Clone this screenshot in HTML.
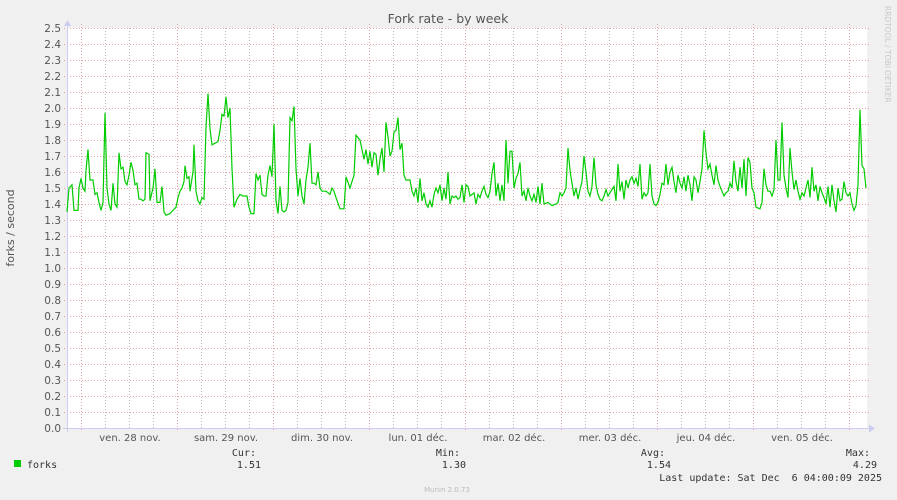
<!DOCTYPE html>
<html><head><meta charset="utf-8"><style>
html,body{margin:0;padding:0;background:#f0f0f0;}
svg{display:block;font-family:"DejaVu Sans","Liberation Sans",sans-serif;}
.m{font-family:"DejaVu Sans Mono","Liberation Mono",monospace;font-size:10px;fill:#333;}
</style></head><body>
<svg width="897" height="500" viewBox="0 0 897 500" xmlns="http://www.w3.org/2000/svg">
<rect width="897" height="500" fill="#f0f0f0"/>
<rect x="67" y="28" width="800" height="400" fill="#fff"/>
<g stroke="#bbb" stroke-width="1" stroke-dasharray="1,2">
<path d="M105.5 28V428M129.5 28V428M153.5 28V428M201.5 28V428M225.5 28V428M249.5 28V428M297.5 28V428M321.5 28V428M345.5 28V428M393.5 28V428M417.5 28V428M441.5 28V428M489.5 28V428M513.5 28V428M537.5 28V428M585.5 28V428M609.5 28V428M633.5 28V428M681.5 28V428M705.5 28V428M729.5 28V428M777.5 28V428M801.5 28V428M825.5 28V428"/>
</g>
<g stroke="#e8a0a0" stroke-width="1" stroke-dasharray="1,2">
<path d="M81.5 24V432M177.5 24V432M273.5 24V432M369.5 24V432M465.5 24V432M561.5 24V432M657.5 24V432M753.5 24V432M849.5 24V432"/>
<path d="M64 28.5H869M64 44.5H869M64 60.5H869M64 76.5H869M64 92.5H869M64 108.5H869M64 124.5H869M64 140.5H869M64 156.5H869M64 172.5H869M64 188.5H869M64 204.5H869M64 220.5H869M64 236.5H869M64 252.5H869M64 268.5H869M64 284.5H869M64 300.5H869M64 316.5H869M64 332.5H869M64 348.5H869M64 364.5H869M64 380.5H869M64 396.5H869M64 412.5H869"/>
</g>
<path d="M67.5 24V432M63 428.5H870" stroke="#ccccf0" stroke-width="1"/>
<path d="M64 26L67.5 20L71 26Z M869 424.5L875 428.5L869 432.5Z" fill="#ccccf0"/>
<g fill="#555" font-size="10.5" text-anchor="end">
<text x="61" y="32">2.5</text><text x="61" y="48">2.4</text><text x="61" y="64">2.3</text><text x="61" y="80">2.2</text><text x="61" y="96">2.1</text><text x="61" y="112">2.0</text><text x="61" y="128">1.9</text><text x="61" y="144">1.8</text><text x="61" y="160">1.7</text><text x="61" y="176">1.6</text><text x="61" y="192">1.5</text><text x="61" y="208">1.4</text><text x="61" y="224">1.3</text><text x="61" y="240">1.2</text><text x="61" y="256">1.1</text><text x="61" y="272">1.0</text><text x="61" y="288">0.9</text><text x="61" y="304">0.8</text><text x="61" y="320">0.7</text><text x="61" y="336">0.6</text><text x="61" y="352">0.5</text><text x="61" y="368">0.4</text><text x="61" y="384">0.3</text><text x="61" y="400">0.2</text><text x="61" y="416">0.1</text><text x="61" y="432">0.0</text>
</g>
<g fill="#555" font-size="10" text-anchor="middle">
<text x="130" y="441">ven. 28 nov.</text><text x="226" y="441">sam. 29 nov.</text><text x="322" y="441">dim. 30 nov.</text><text x="418" y="441">lun. 01 déc.</text><text x="514" y="441">mar. 02 déc.</text><text x="610" y="441">mer. 03 déc.</text><text x="706" y="441">jeu. 04 déc.</text><text x="802" y="441">ven. 05 déc.</text>
</g>
<text x="448" y="23" fill="#555" font-size="12.5" text-anchor="middle">Fork rate - by week</text>
<text transform="translate(14,228) rotate(-90)" fill="#555" font-size="11" text-anchor="middle">forks / second</text>
<text transform="translate(885,6) rotate(90)" fill="#c8c8c8" font-size="7.5">RRDTOOL / TOBI OETIKER</text>
<g transform="translate(0,428) scale(1,-160)">
<polyline vector-effect="non-scaling-stroke" fill="none" stroke="#00cc00" stroke-width="1.2" points="67,1.35 69,1.5 72,1.52 74,1.36 78,1.36 79,1.5 81,1.56 83,1.5 85,1.48 86,1.61 88,1.74 90,1.55 93,1.55 95,1.46 97,1.47 99,1.41 101,1.36 103,1.41 105,1.97 107,1.5 109,1.4 111,1.36 113,1.53 115,1.4 117,1.38 119,1.72 121,1.62 123,1.63 125,1.54 127,1.52 129,1.58 131,1.66 133,1.61 135,1.52 137,1.53 139,1.43 141,1.43 143,1.42 145,1.43 146,1.72 149,1.71 150,1.42 153,1.5 155,1.62 157,1.41 160,1.41 162,1.51 164,1.35 166,1.33 170,1.34 173,1.36 176,1.38 178,1.44 180,1.48 182,1.5 184,1.54 185,1.64 187,1.56 189,1.57 190,1.48 193,1.6 194,1.77 196,1.48 198,1.42 200,1.40 202,1.44 204,1.43 206,1.88 208,2.09 210,1.87 212,1.77 215,1.78 218,1.79 220,1.86 222,1.96 224,1.95 226,2.07 228,1.94 230,2.0 232,1.62 234,1.38 237,1.43 240,1.46 243,1.45 247,1.45 249,1.38 251,1.34 254,1.34 256,1.59 258,1.55 260,1.58 262,1.46 264,1.45 266,1.45 268,1.58 270,1.64 272,1.57 274,1.9 276,1.42 278,1.34 280,1.51 282,1.36 284,1.35 286,1.36 288,1.41 290,1.94 292,1.92 294,2.01 296,1.62 298,1.45 300,1.56 302,1.45 304,1.40 306,1.55 308,1.63 310,1.78 312,1.53 314,1.53 316,1.52 318,1.6 320,1.5 322,1.48 326,1.48 330,1.46 332,1.50 334,1.48 336,1.44 340,1.37 344,1.37 346,1.57 350,1.5 354,1.58 356,1.83 360,1.80 364,1.68 366,1.74 368,1.65 370,1.73 372,1.63 374,1.72 376,1.71 378,1.58 380,1.68 382,1.75 384,1.6 386,1.91 388,1.82 390,1.70 392,1.73 394,1.85 396,1.86 398,1.94 400,1.74 402,1.78 404,1.58 406,1.55 410,1.55 412,1.48 414,1.45 416,1.50 418,1.41 420,1.56 422,1.42 424,1.47 426,1.40 428,1.38 430,1.42 432,1.38 434,1.46 436,1.50 438,1.47 440,1.52 442,1.42 444,1.50 446,1.43 448,1.60 450,1.40 452,1.45 454,1.44 456,1.45 458,1.43 460,1.44 462,1.52 464,1.41 466,1.52 468,1.51 470,1.45 474,1.47 476,1.40 478,1.46 480,1.44 482,1.48 484,1.51 486,1.46 488,1.44 490,1.48 492,1.59 494,1.66 496,1.45 498,1.53 500,1.42 502,1.52 504,1.42 506,1.80 508,1.53 510,1.73 512,1.73 514,1.50 516,1.56 518,1.59 520,1.66 522,1.45 524,1.48 526,1.42 528,1.50 530,1.45 532,1.42 534,1.46 536,1.41 538,1.51 540,1.40 542,1.53 544,1.40 548,1.41 552,1.39 556,1.40 558,1.41 560,1.47 562,1.45 564,1.47 566,1.50 568,1.75 570,1.61 572,1.53 574,1.45 576,1.50 578,1.43 580,1.49 582,1.54 584,1.70 586,1.60 588,1.48 590,1.45 592,1.51 594,1.69 596,1.52 598,1.46 600,1.43 602,1.42 604,1.45 606,1.49 608,1.45 610,1.47 612,1.49 614,1.51 616,1.42 618,1.65 620,1.48 622,1.54 624,1.43 626,1.55 628,1.50 630,1.55 632,1.57 634,1.53 636,1.56 638,1.51 640,1.65 642,1.43 644,1.47 646,1.45 648,1.47 650,1.65 652,1.45 654,1.40 656,1.39 658,1.41 660,1.46 662,1.53 664,1.52 666,1.65 668,1.52 670,1.60 672,1.63 674,1.54 676,1.47 678,1.58 680,1.53 682,1.50 684,1.57 686,1.48 688,1.58 690,1.52 692,1.42 694,1.57 696,1.55 698,1.47 700,1.54 702,1.62 704,1.86 706,1.72 708,1.62 710,1.65 712,1.58 714,1.52 716,1.64 718,1.55 720,1.51 722,1.48 724,1.45 726,1.47 728,1.48 730,1.53 732,1.50 734,1.67 736,1.54 738,1.48 740,1.63 742,1.50 744,1.68 746,1.45 748,1.69 750,1.66 752,1.50 754,1.47 756,1.38 760,1.37 762,1.41 764,1.62 766,1.52 768,1.48 770,1.48 772,1.45 774,1.49 776,1.80 778,1.55 780,1.55 782,1.91 784,1.58 786,1.50 788,1.44 790,1.75 792,1.60 794,1.49 796,1.55 798,1.48 800,1.43 802,1.47 804,1.45 806,1.50 808,1.55 810,1.44 812,1.63 814,1.48 816,1.52 818,1.42 820,1.51 822,1.47 824,1.44 826,1.40 828,1.51 830,1.38 832,1.52 834,1.42 836,1.35 838,1.50 840,1.42 842,1.43 844,1.54 846,1.47 848,1.45 850,1.47 852,1.40 854,1.36 856,1.39 858,1.52 860,1.99 862,1.64 864,1.62 866,1.50"/>
</g>
<rect x="14" y="460" width="7" height="7" fill="#00cc00"/>
<text class="m" x="27" y="468">forks</text>
<g class="m" text-anchor="end">
<text x="256" y="456">Cur:</text><text x="261" y="468">1.51</text>
<text x="460" y="456">Min:</text><text x="466" y="468">1.30</text>
<text x="665" y="456">Avg:</text><text x="671" y="468">1.54</text>
<text x="870" y="456">Max:</text><text x="877" y="468">4.29</text>
<text x="882" y="481" xml:space="preserve">Last update: Sat Dec  6 04:00:09 2025</text>
</g>
<text x="447" y="492" fill="#bbb" font-size="7" text-anchor="middle">Munin 2.0.73</text>
</svg>
</body></html>
